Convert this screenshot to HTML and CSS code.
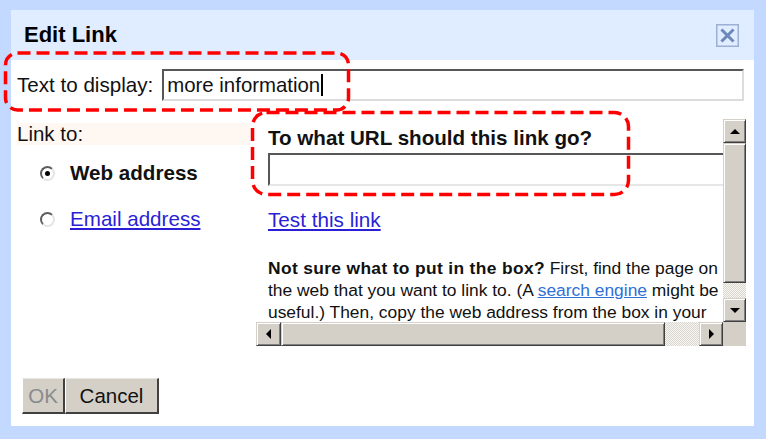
FILE: index.html
```html
<!DOCTYPE html>
<html>
<head>
<meta charset="utf-8">
<link rel="stylesheet" href="styles.css">
</head>
<body>
<div class="dialog">
  <div class="titlebar">
    <span class="title">Edit Link</span>
    <span class="close">
      <svg width="23" height="23" viewBox="0 0 23 23"><rect x="0.75" y="0.75" width="21.5" height="21.5" fill="none" stroke="#9cb0d5" stroke-width="1.5"/><path d="M6.5 6.5 L16.5 16.5 M16.5 6.5 L6.5 16.5" stroke="#6d89b9" stroke-width="3" stroke-linecap="square"/></svg>
    </span>
  </div>
  <div class="row1">
    <span class="lbl">Text to display:</span>
    <div class="textbox">more information<span class="caret"></span></div>
  </div>
  <div class="main">
    <div class="left">
      <div class="linkto">Link to:</div>
      <div class="radios">
        <div class="radio-row"><span class="radio checked"></span><span class="opt-bold">Web address</span></div>
        <div class="radio-row"><span class="radio"></span><a class="link">Email address</a></div>
      </div>
    </div>
    <div class="panel">
      <div class="view">
        <div class="content">
          <div class="q">To what URL should this link go?</div>
          <div class="urlbox"></div>
          <a class="link test">Test this link</a>
          <p class="help"><b>Not sure what to put in the box?</b> First, find the page on<br>the web that you want to link to. (A <a class="link2">search engine</a> might be<br>useful.) Then, copy the web address from the box in your</p>
        </div>
      </div>
      <div class="vbar">
        <div class="sbtn"><span class="arr up"></span></div>
        <div class="thumb vthumb"></div>
        <div class="track"></div>
        <div class="sbtn"><span class="arr down"></span></div>
      </div>
      <div class="hbar">
        <div class="sbtn hb"><span class="arr lft"></span></div>
        <div class="thumb hthumb"></div>
        <div class="track"></div>
        <div class="sbtn hb"><span class="arr rgt"></span></div>
      </div>
      <div class="corner"></div>
    </div>
  </div>
  <div class="buttons">
    <button class="btn ok">OK</button><button class="btn cancel">Cancel</button>
  </div>
</div>
<svg class="anno a1" width="354" height="64" viewBox="0 0 354 64"><rect x="5.5" y="3" width="343" height="57" rx="12" fill="none" stroke="#ff0000" stroke-width="3.5" stroke-dasharray="13 6"/></svg>
<svg class="anno a2" width="386" height="92" viewBox="0 0 386 92"><rect x="3.5" y="3.5" width="376" height="82" rx="14" fill="none" stroke="#ff0000" stroke-width="3.5" stroke-dasharray="13 6"/></svg>
</body>
</html>
```

FILE: styles.css
```css
html, body {
  margin: 0;
  padding: 0;
}
body {
  position: relative;
  width: 766px;
  height: 439px;
  overflow: hidden;
  background: #c3d9ff;
  font-family: "Liberation Sans", Arial, sans-serif;
  color: #111;
}
.dialog {
  margin: 10px 0 0 11px;
  width: 743px;
  height: 416px;
  background: #fff;
  display: flex;
  flex-direction: column;
}
.titlebar {
  height: 50px;
  flex: none;
  background: #e0ecff;
  display: flex;
  align-items: center;
  justify-content: space-between;
  padding: 0 15px 0 13px;
}
.title {
  font-weight: bold;
  font-size: 22px;
  color: #000;
}
.close {
  width: 23px;
  height: 23px;
  display: block;
}
.close svg { display: block; }
.row1 {
  margin-top: 9px;
  display: flex;
  align-items: center;
  gap: 9px;
  padding-left: 6px;
  padding-right: 10px;
}
.lbl {
  font-size: 20.6px;
  white-space: nowrap;
}
.textbox {
  flex: 1;
  height: 32px;
  box-sizing: border-box;
  border-style: solid;
  border-width: 2px;
  border-color: #575757 #dcdcdc #dcdcdc #575757;
  font-size: 20.4px;
  line-height: 28px;
  padding-left: 3px;
  display: flex;
  align-items: center;
}
.caret {
  display: inline-block;
  width: 1.5px;
  height: 22px;
  background: #000;
  margin-left: 1px;
}
.main {
  margin-top: 18px;
  display: flex;
  height: 227px;
}
.left {
  width: 233px;
  margin-left: 6px;
  padding-top: 4px;
}
.linkto {
  height: 22px;
  line-height: 22px;
  font-size: 20.5px;
  background: #fff8f2;
}
.radios { margin-top: 5px; }
.radio-row {
  height: 46px;
  display: flex;
  align-items: center;
  padding-left: 23px;
  gap: 15px;
  font-size: 20.6px;
}
.radio {
  width: 15px;
  height: 15px;
  box-sizing: border-box;
  border-radius: 50%;
  border: 2px solid;
  border-color: #5e5e5e #e4e4e4 #e4e4e4 #5e5e5e;
  background: #fff;
  display: flex;
  align-items: center;
  justify-content: center;
}
.radio.checked::after {
  content: "";
  width: 5px;
  height: 5px;
  border-radius: 50%;
  background: #000;
}
.opt-bold { font-weight: bold; }
.link {
  color: #2a1fd6;
  text-decoration: underline;
}
.panel {
  margin-left: 6px;
  width: 490px;
  height: 227px;
  display: grid;
  grid-template-columns: 1fr 23px;
  grid-template-rows: 1fr 24px;
}
.view {
  overflow: hidden;
  position: relative;
}
.content {
  padding: 7px 0 0 12px;
  width: 600px;
}
.q {
  font-weight: bold;
  font-size: 20.6px;
  line-height: 23px;
}
.urlbox {
  margin-top: 4px;
  width: 470px;
  height: 33px;
  box-sizing: border-box;
  border-style: solid;
  border-width: 2px;
  border-color: #575757 #dcdcdc #e6e6e6 #575757;
}
.test {
  display: inline-block;
  margin-top: 22px;
  font-size: 20.7px;
  line-height: 23px;
}
.help {
  margin: 26px 0 0 0;
  font-size: 17.4px;
  line-height: 22px;
  white-space: nowrap;
}
.help b {
  letter-spacing: 0.35px;
}
.link2 {
  color: #2f6fd6;
  text-decoration: underline;
}
.vbar {
  display: flex;
  flex-direction: column;
}
.hbar {
  display: flex;
}
.sbtn {
  flex: none;
  height: 24px;
  box-sizing: border-box;
  background: #d4d0c8;
  border-style: solid;
  border-width: 1px;
  border-color: #d4d0c8 #404040 #404040 #d4d0c8;
  box-shadow: inset 1px 1px #fff, inset -1px -1px #808080;
  display: flex;
  align-items: center;
  justify-content: center;
}
.sbtn.hb { width: 25px; }
.hbar .sbtn:last-child { width: 24px; }
.thumb {
  flex: none;
  box-sizing: border-box;
  background: #d4d0c8;
  border-style: solid;
  border-width: 1px;
  border-color: #d4d0c8 #404040 #404040 #d4d0c8;
  box-shadow: inset 1px 1px #fff, inset -1px -1px #808080;
}
.vthumb { height: 140px; }
.hthumb { width: 384px; }
.track {
  flex: 1;
  background-color: #eeece8;
  background-image: repeating-conic-gradient(#d9d6cf 0 25%, #f7f6f3 0 50%);
  background-size: 2px 2px;
}
.arr {
  width: 0;
  height: 0;
  border-style: solid;
}
.arr.up {
  border-width: 0 5px 5px 5px;
  border-color: transparent transparent #000 transparent;
}
.arr.down {
  border-width: 5px 5px 0 5px;
  border-color: #000 transparent transparent transparent;
}
.arr.lft {
  border-width: 5px 5px 5px 0;
  border-color: transparent #000 transparent transparent;
}
.arr.rgt {
  border-width: 5px 0 5px 5px;
  border-color: transparent transparent transparent #000;
}
.corner {
  background: #d4d0c8;
}
.buttons {
  margin-top: 32px;
  padding-left: 11px;
  display: flex;
}
.btn {
  height: 36px;
  box-sizing: border-box;
  background: #d4d0c8;
  font-family: "Liberation Sans", Arial, sans-serif;
  font-size: 20.5px;
  border-style: solid;
  border-width: 1px 2px 2px 1px;
  border-color: #e8e6e2 #404040 #404040 #ffffff;
  padding: 0;
  margin: 0;
  color: #111;
}
.btn.ok {
  width: 43px;
  color: #8a8a8a;
}
.btn.cancel {
  width: 94px;
}
.anno {
  position: absolute;
  display: block;
}
.a1 { left: 0; top: 50px; }
.a2 { left: 249px; top: 109px; }
```
